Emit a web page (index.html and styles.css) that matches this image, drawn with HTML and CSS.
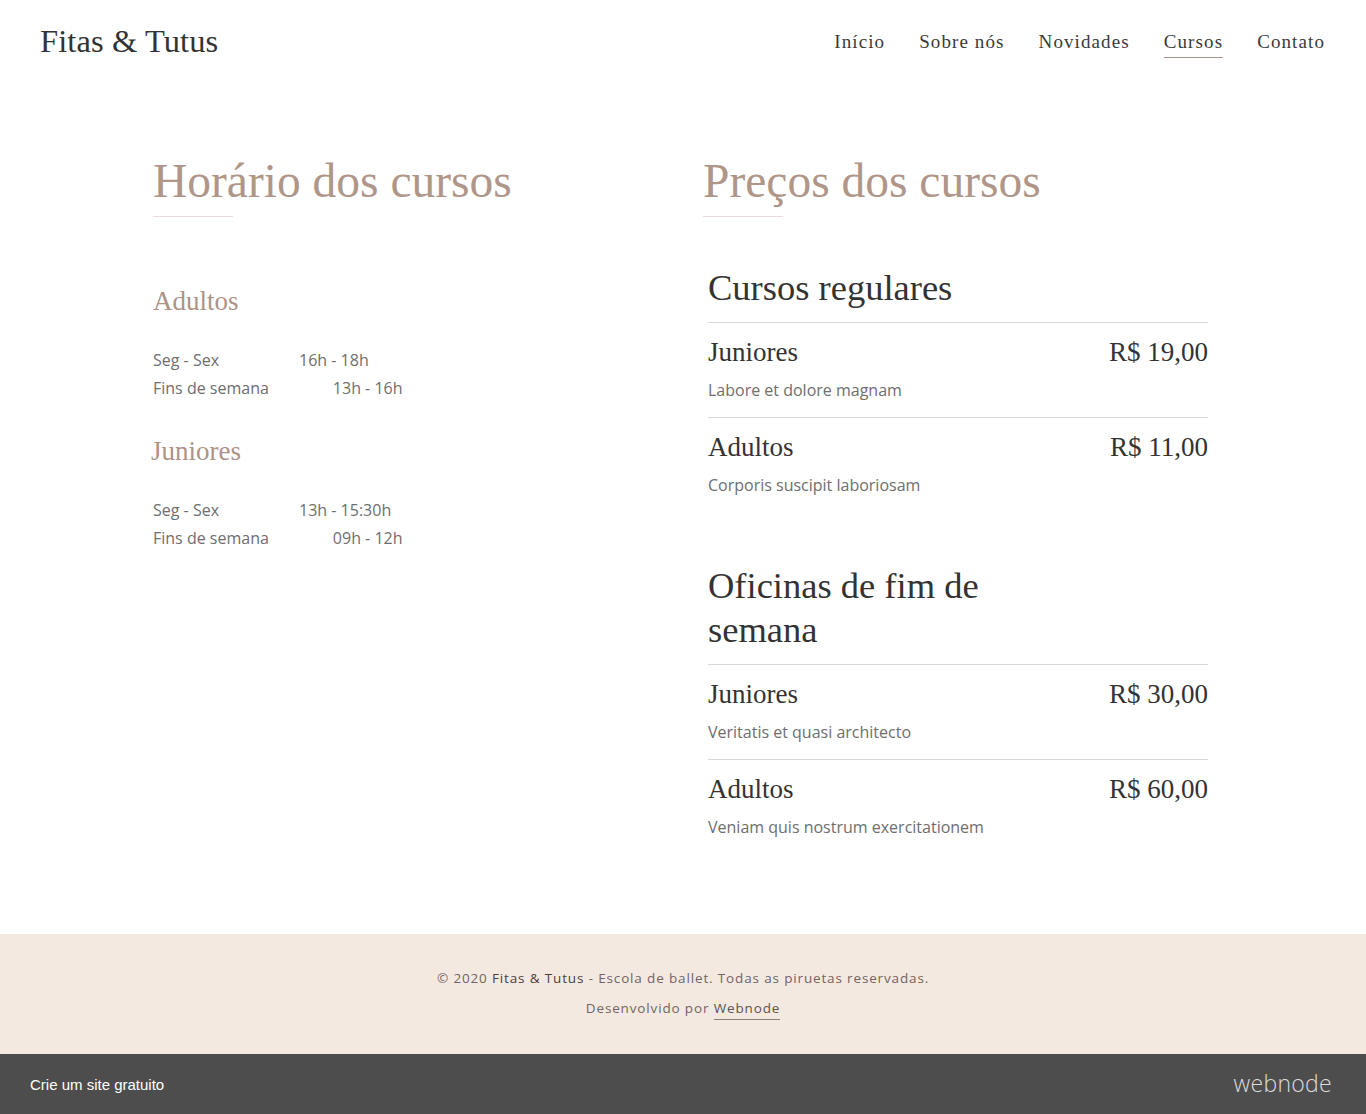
FILE: index.html
```html
<!DOCTYPE html>
<html lang="pt">
<head>
<meta charset="utf-8">
<title>Cursos - Fitas &amp; Tutus</title>
<link rel="stylesheet" href="styles.css">
</head>
<body>
<header class="site-header">
  <a class="logo" href="#">Fitas &amp; Tutus</a>
  <nav class="nav">
    <a href="#">Início</a>
    <a href="#">Sobre nós</a>
    <a href="#">Novidades</a>
    <a href="#" class="active">Cursos</a>
    <a href="#">Contato</a>
  </nav>
</header>

<main class="content">
  <section class="col">
    <h1 class="title">Horário dos cursos</h1>
    <div class="sched">
      <h3 class="sched-title">Adultos</h3>
      <p class="row"><span>Seg - Sex</span><span class="t1">16h - 18h</span></p>
      <p class="row"><span>Fins de semana</span><span class="t2">13h - 16h</span></p>
    </div>
    <div class="sched">
      <h3 class="sched-title jr">Juniores</h3>
      <p class="row"><span>Seg - Sex</span><span class="t1">13h - 15:30h</span></p>
      <p class="row"><span>Fins de semana</span><span class="t2">09h - 12h</span></p>
    </div>
  </section>

  <section class="col">
    <h1 class="title">Preços dos cursos</h1>
    <div class="prices">
      <div class="group">
        <h2 class="group-title">Cursos regulares</h2>
        <div class="item">
          <div class="item-head"><span>Juniores</span><span>R$ 19,00</span></div>
          <p class="desc">Labore et dolore magnam</p>
        </div>
        <div class="item">
          <div class="item-head"><span>Adultos</span><span>R$ 11,00</span></div>
          <p class="desc">Corporis suscipit laboriosam</p>
        </div>
      </div>
      <div class="group">
        <h2 class="group-title narrow">Oficinas de fim de semana</h2>
        <div class="item">
          <div class="item-head"><span>Juniores</span><span>R$ 30,00</span></div>
          <p class="desc">Veritatis et quasi architecto</p>
        </div>
        <div class="item">
          <div class="item-head"><span>Adultos</span><span>R$ 60,00</span></div>
          <p class="desc">Veniam quis nostrum exercitationem</p>
        </div>
      </div>
    </div>
  </section>
</main>

<footer class="site-footer">
  <p>© 2020 <strong>Fitas &amp; Tutus</strong> - Escola de ballet. Todas as piruetas reservadas.</p>
  <p>Desenvolvido por <a href="#">Webnode</a></p>
</footer>

<div class="promo">
  <a href="#" class="promo-link">Crie um site gratuito</a>
  <span class="promo-logo">webnode</span>
</div>
</body>
</html>
```

FILE: styles.css
```css
* { box-sizing: border-box; }
html, body { margin: 0; padding: 0; }
body {
  background: #fff;
  font-family: "Open Sans", Lato, sans-serif;
  color: #6e6e6e;
}
a { text-decoration: none; color: inherit; }

.site-header {
  height: 82px;
  display: flex;
  align-items: center;
  justify-content: space-between;
  padding: 0 41px 0 40px;
}
.logo {
  font-family: "Liberation Serif", serif;
  font-size: 32.5px;
  color: #333;
  letter-spacing: 0.1px;
}
.nav {
  display: flex;
  gap: 34px;
  padding-top: 2px;
}
.nav a {
  font-family: "Liberation Serif", serif;
  font-size: 19px;
  letter-spacing: 1.1px;
  color: #3a3a3a;
  padding: 4px 0 4px;
  border-bottom: 1px solid transparent;
}
.nav a.active { border-bottom-color: #a89592; }

.content {
  width: 1100px;
  margin: 0 auto;
  display: grid;
  grid-template-columns: 1fr 1fr;
  padding: 72px 0 80px;
}
.col { padding: 0 20px; }

.title {
  margin: 0;
  font-family: "Liberation Serif", serif;
  font-weight: normal;
  font-size: 47.5px;
  line-height: 54px;
  color: #b09689;
}
.title::after {
  content: "";
  display: block;
  width: 80px;
  height: 1px;
  background: #ecdcdc;
  margin-top: 8px;
}

.sched { margin-top: 31px; }
.col > .title + .sched { margin-top: 66px; }
.sched-title {
  margin: 0 0 27px;
  font-family: "Liberation Serif", serif;
  font-weight: normal;
  font-size: 27px;
  line-height: 36px;
  color: #ad9286;
}
.sched-title.jr { margin-left: -2px; }
.row {
  margin: 0;
  font-size: 16px;
  line-height: 28px;
  color: #6e6e6e;
}
.row .t1 { margin-left: 80px; }
.row .t2 { margin-left: 64px; }

.prices { padding: 0 5px; }
.group { margin-top: 52px; }
.prices > .group:first-child { margin-top: 49px; }
.group-title {
  margin: 0;
  padding-bottom: 12px;
  border-bottom: 1px solid #d8d8d8;
  font-family: "Liberation Serif", serif;
  font-weight: normal;
  font-size: 36.5px;
  line-height: 44px;
  color: #333;
}
.group-title.narrow { max-width: 330px; border-bottom: none; }
.group-title.narrow + .item { border-top: 1px solid #d8d8d8; }
.item {
  padding: 11px 0 13px;
}
.item + .item { border-top: 1px solid #d8d8d8; }
.item-head {
  display: flex;
  justify-content: space-between;
  font-family: "Liberation Serif", serif;
  font-size: 27px;
  line-height: 36px;
  color: #333;
}
.desc {
  margin: 6px 0 0;
  font-size: 16px;
  line-height: 28px;
  color: #6e6e6e;
}

.site-footer {
  background: #f4e9e0;
  height: 120px;
  padding-top: 29px;
  text-align: center;
  font-size: 13.5px;
  letter-spacing: 0.85px;
  color: #716464;
}
.site-footer p { margin: 0; line-height: 30px; }
.site-footer strong { font-weight: normal; color: #4a4040; }
.site-footer a {
  color: #5c5252;
  border-bottom: 1px solid #8a8080;
  padding-bottom: 2px;
}

.promo {
  height: 60px;
  background: #4d4d4d;
  display: flex;
  align-items: center;
  justify-content: space-between;
  padding: 0 34px 0 30px;
}
.promo-link {
  font-family: "Liberation Sans", Arial, sans-serif;
  font-size: 15px;
  color: #fff;
}
.promo-logo {
  font-family: "Open Sans", sans-serif;
  font-weight: 300;
  font-size: 23px;
  color: #dcdcdc;
  letter-spacing: 0.3px;
  padding-bottom: 2px;
}
```
